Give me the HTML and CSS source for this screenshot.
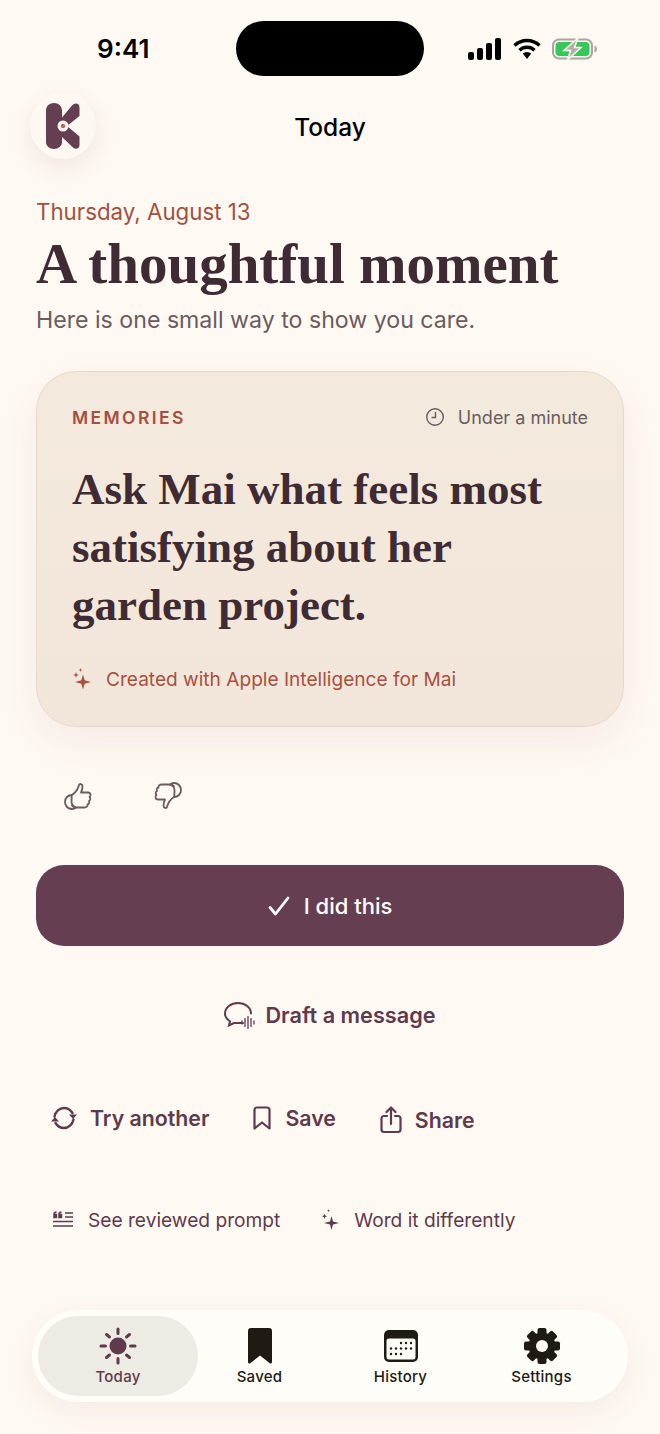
FILE: index.html
```html
<!DOCTYPE html>
<html lang="en">
<head>
    <meta charset="UTF-8">
    <meta name="viewport" content="width=device-width, initial-scale=1.0">
    <title>Today</title>
    <link rel="stylesheet" href="styles.css">
</head>
<body>
    <div class="screen">
        <div class="status-bar">
            <span class="time">9:41</span>
            <div class="island"></div>
            <div class="status-icons">
                <svg width="34" height="22" viewBox="0 0 34 22"><rect x="0" y="14" width="6" height="8" rx="2"/><rect x="9" y="10" width="6" height="12" rx="2"/><rect x="18" y="5" width="6" height="17" rx="2"/><rect x="27" y="0" width="6" height="22" rx="2"/></svg>
                <svg width="28" height="22" viewBox="0 0 28 22"><path d="M1.500 7.500a18 18 0 0 1 25 0" fill="none" stroke="#000" stroke-width="3.400"/><path d="M6.500 12.200a11 11 0 0 1 15 0" fill="none" stroke="#000" stroke-width="3.400"/><path d="M9.800 15.600a6 6 0 0 1 8.400 0L14 21z"/></svg>
                <svg width="46" height="22" viewBox="0 0 46 22"><rect x="1" y="1.500" width="39" height="19" rx="6" fill="none" stroke="#a9a6a0" stroke-width="2"/><rect x="3.500" y="4" width="34" height="14" rx="4" fill="#35c759"/><path d="M42.500 7.500c1.600.5 2.500 2 2.500 3.500s-.9 3-2.500 3.500z" fill="#a9a6a0"/><path d="M26 0 12 12.500h6.500L15.500 22 29 9.500h-6.500z" fill="#b3afa8" stroke="#fff9f3" stroke-width="1.500"/></svg>
            </div>
        </div>

        <div class="top-nav">
            <div class="logo">
                <svg width="34" height="46" viewBox="0 0 34 46">
                    <path d="M8 0c4.500 0 8 3 8 7.500v7L26 2.500c3-3.500 7.500-2.500 7.500 2v8.500L21 23l12.500 10.500V42c0 3.500-3.500 5-6.500 2.500L16 34v5c0 4-3.500 7-8 7s-8-3-8-7V7.500C0 3 3.500 0 8 0z" fill="#653e52"/>
                    <circle cx="17" cy="23" r="5.500" fill="#fdf8f1"/>
                    <circle cx="17" cy="23" r="2.200" fill="#cf5f45"/>
                </svg>
            </div>
            <h2 class="nav-title">Today</h2>
        </div>

        <div class="intro">
            <p class="date">Thursday, August 13</p>
            <h1>A thoughtful moment</h1>
            <p class="sub">Here is one small way to show you care.</p>
        </div>

        <div class="card">
            <div class="card-top">
                <span class="tag">MEMORIES</span>
                <span class="duration">
                    <svg width="20" height="20" viewBox="0 0 20 20" fill="none" stroke="#6a5c5f" stroke-width="1.400"><circle cx="10" cy="10" r="8.300"/><path d="M10.500 5v5.500H6.500"/></svg>
                    Under a minute
                </span>
            </div>
            <p class="card-title">Ask Mai what feels most satisfying about her garden project.</p>
            <div class="credit">
                <svg width="20" height="22" viewBox="0 0 20 22" fill="#a8503f"><path d="M11 6.500l1.700 5.800 6.300 1.700-6.300 1.700L11 21.500l-1.700-5.800L3 14l6.300-1.700z"/><path d="M4 4l.7 2.300L7 7l-2.300.7L4 10l-.7-2.300L1 7l2.300-.7z"/><path d="M8.500 0l.5 1.500 1.500.5-1.500.5-.5 1.500-.5-1.500L6.500 2 8 1.500z"/></svg>
                Created with Apple Intelligence for Mai
            </div>
        </div>

        <div class="feedback">
            <svg width="28" height="28" viewBox="0 0 28 28" fill="none" stroke="#6a5c5f" stroke-width="1.800" stroke-linejoin="round" stroke-linecap="round">
                <path d="M8 13c3-2 6-6 7-10 .4-1.500 3.500-1.500 3.500 1.500 0 2.500-.8 4.500-1.500 6h7c3 0 3 3.500 1.500 4.500 1.300 1 1 3.300-.5 4 .7 1.500 0 3.200-1.500 3.500.3 1.800-1 3-3 3h-7c-3 0-5-1-5.500-2"/>
                <path d="M8 13c-4 0-7 3-7 7s3 7 7 7c2 0 3-.5 4-1.500-2.500-1-4.500-3-4.500-6 0-2.500.5-4.500 0-6.500z"/>
            </svg>
            <svg width="28" height="28" viewBox="0 0 28 28" fill="none" stroke="#6a5c5f" stroke-width="1.800" stroke-linejoin="round" stroke-linecap="round">
                <path d="M20 15c-3 2-6 6-7 10-.4 1.500-3.500 1.500-3.500-1.500 0-2.500.8-4.500 1.500-6H4c-3 0-3-3.500-1.500-4.500-1.300-1-1-3.300.5-4-.7-1.500 0-3.200 1.500-3.500C4.200 3.700 5.500 2.500 7.500 2.500h7c3 0 5 1 5.500 2"/>
                <path d="M20 15c4 0 7-3 7-7s-3-7-7-7c-2 0-3 .5-4 1.500 2.500 1 4.500 3 4.500 6 0 2.500-.5 4.500 0 6.500z"/>
            </svg>
        </div>

        <button class="done-btn">
            <svg width="22" height="20" viewBox="0 0 22 20" fill="none" stroke="#fff" stroke-width="2.800" stroke-linecap="round" stroke-linejoin="round"><path d="M2 11.500 7.500 18 20 2"/></svg>
            I did this
        </button>

        <div class="draft">
            <svg width="32" height="28" viewBox="0 0 32 28" fill="none" stroke="#5f3a4d" stroke-width="2" stroke-linecap="round">
                <path d="M19 22H10l-5 2.500 1-4C3 18.500 1 15.500 1 12.500 1 6.500 7 2 14 2s13 4.500 13 10.500"/>
                <path d="M18 20v3M21 17.500v8M24 15.500v12M27 17.500v8M30 20v3" stroke-width="1.300"/>
            </svg>
            Draft a message
        </div>

        <div class="actions">
            <span class="action">
                <svg width="28" height="26" viewBox="0 0 28 26" fill="none" stroke="#5f3a4d" stroke-width="2.400" stroke-linecap="round">
                    <path d="M4.500 11.500C5.500 6.500 9.500 3 14 3c3.500 0 6.500 1.800 8.500 5"/>
                    <path d="M23.500 14.500C22.500 19.500 18.500 23 14 23c-3.500 0-6.500-1.800-8.500-5"/>
                    <path d="M27 9.500l-4 4.500-4-4.500z" fill="#5f3a4d" stroke="none"/>
                    <path d="M1 16.500l4-4.500 4 4.500z" fill="#5f3a4d" stroke="none"/>
                </svg>
                Try another
            </span>
            <span class="action save">
                <svg width="18" height="24" viewBox="0 0 18 24" fill="none" stroke="#5f3a4d" stroke-width="2.200" stroke-linejoin="round"><path d="M4 1.500h10c1.500 0 2.500 1 2.500 2.500v18.500L9 16.500 1.500 22.500V4c0-1.500 1-2.500 2.500-2.500z"/></svg>
                Save
            </span>
            <span class="action share">
                <svg width="22" height="28" viewBox="0 0 22 28" fill="none" stroke="#5f3a4d" stroke-width="2.200" stroke-linecap="round" stroke-linejoin="round"><path d="M7 10H4c-1.500 0-2.500 1-2.500 2.500v11c0 1.500 1 2.500 2.500 2.500h14c1.500 0 2.500-1 2.500-2.500v-11c0-1.500-1-2.500-2.500-2.500h-3"/><path d="M11 18V2M6.500 6 11 1.500 15.500 6"/></svg>
                Share
            </span>
        </div>

        <div class="links">
            <span class="link">
                <svg width="20" height="18" viewBox="0 0 20 18" fill="none" stroke="#5f3a4d" stroke-width="1.500"><path d="M12 2h8M12 6h8M0 10.500h20M0 15h20"/><path d="M1 3.500C1 2 2 1 3.500 1M1 3.500h2.500v3H1zM6 3.500C6 2 7 1 8.500 1M6 3.500h2.500v3H6z" fill="#5f3a4d"/></svg>
                See reviewed prompt
            </span>
            <span class="link second">
                <svg width="18" height="22" viewBox="0 0 18 22" fill="#5f3a4d"><path d="M10.500 7l1.500 5.500L18 14l-6 1.500L10.500 21 9 15.500 3 14l6-1.500z"/><path d="M3.500 4.500l.7 2 2 .7-2 .7-.7 2-.7-2-2-.7 2-.7z"/><path d="M7.500 0l.4 1.300 1.300.4-1.300.4-.4 1.300-.4-1.300-1.300-.4 1.300-.4z"/></svg>
                Word it differently
            </span>
        </div>

        <div class="tab-bar">
            <div class="tab active">
                <svg width="38" height="38" viewBox="0 0 38 38" fill="#5f3a4d" stroke="#5f3a4d" stroke-width="3" stroke-linecap="round">
                    <circle cx="19" cy="19" r="8.500" stroke="none"/>
                    <path d="M19 2v4.500M19 31.500V36M2 19h4.500M31.500 19H36M7.500 7.500l3 2.500M30.500 7.500l-3 2.500M7.500 30.500l3-2.500M30.500 30.500l-3-2.500"/>
                </svg>
                <span>Today</span>
            </div>
            <div class="tab">
                <svg width="38" height="38" viewBox="0 0 38 38"><path d="M10 1h18c2 0 3 1 3 3v31c0 1.500-1.500 2-2.500 1L19 28.500 9.500 36c-1 1-2.500.5-2.500-1V4c0-2 1-3 3-3z" fill="#201a14"/></svg>
                <span>Saved</span>
            </div>
            <div class="tab">
                <svg width="38" height="38" viewBox="0 0 38 38">
                    <rect x="2" y="3" width="34" height="32" rx="5" fill="#201a14"/>
                    <rect x="4.500" y="11.500" width="29" height="21" rx="2.500" fill="#fffdf8"/>
                    <g fill="#201a14"><circle cx="19" cy="16" r="1.200"/><circle cx="24" cy="16" r="1.200"/><circle cx="29" cy="16" r="1.200"/><circle cx="9" cy="21.500" r="1.200"/><circle cx="14" cy="21.500" r="1.200"/><circle cx="19" cy="21.500" r="1.200"/><circle cx="24" cy="21.500" r="1.200"/><circle cx="29" cy="21.500" r="1.200"/><circle cx="9" cy="27" r="1.200"/><circle cx="14" cy="27" r="1.200"/><circle cx="19" cy="27" r="1.200"/></g>
                </svg>
                <span>History</span>
            </div>
            <div class="tab">
                <svg width="38" height="38" viewBox="0 0 38 38">
                    <g fill="#201a14">
                        <circle cx="19" cy="19" r="13.500"/>
                        <rect x="14.500" y="1" width="9" height="36" rx="2"/>
                        <rect x="14.500" y="1" width="9" height="36" rx="2" transform="rotate(45 19 19)"/>
                        <rect x="14.500" y="1" width="9" height="36" rx="2" transform="rotate(90 19 19)"/>
                        <rect x="14.500" y="1" width="9" height="36" rx="2" transform="rotate(135 19 19)"/>
                    </g>
                    <circle cx="19" cy="19" r="6" fill="#fffdf8"/>
                </svg>
                <span>Settings</span>
            </div>
        </div>
    </div>
</body>
</html>
```
FILE: styles.css
```css
body {
    margin: 0;
    font-family: Inter, "Liberation Sans", sans-serif;
    background: #fff9f3;
}
.screen {
    width: 660px;
    height: 1434px;
    overflow: hidden;
    display: flex;
    flex-direction: column;
    background: #fff9f3;
}
.status-bar {
    height: 55px;
    padding-top: 21px;
    display: flex;
    align-items: center;
}
.time {
    width: 236px;
    padding-left: 97px;
    box-sizing: border-box;
    font-size: 26px;
    font-weight: 600;
    color: #000;
}
.island {
    width: 188px;
    height: 55px;
    border-radius: 28px;
    background: #000;
}
.status-icons {
    margin-left: 44px;
    display: flex;
    align-items: center;
    gap: 11px;
}
.top-nav {
    margin-top: 17px;
    height: 66px;
    padding-left: 30px;
    display: flex;
    align-items: center;
}
.logo {
    width: 66px;
    height: 66px;
    border-radius: 50%;
    background: #fdf9f2;
    box-shadow: 0 8px 24px rgba(90, 60, 50, 0.1);
    display: flex;
    align-items: center;
    justify-content: center;
}
.nav-title {
    margin: 2px 0 0;
    width: 468px;
    text-align: center;
    font-size: 24.500px;
    font-weight: 500;
    color: #000;
}
.intro {
    margin-top: 38px;
    padding-left: 36px;
}
.date {
    margin: 0;
    font-size: 22.300px;
    line-height: 30px;
    color: #a4503f;
}
h1 {
    margin: 6px 0 0;
    font-family: "Liberation Serif", serif;
    font-size: 57px;
    line-height: 62px;
    font-weight: 700;
    color: #3f2b33;
}
.sub {
    margin: 10px 0 0;
    font-size: 23.150px;
    line-height: 30px;
    color: #6a5c5f;
}
.card {
    margin: 36px 36px 0;
    height: 356px;
    box-sizing: border-box;
    padding: 35px 35px 0;
    border: 1.500px solid #e8d8ca;
    border-radius: 40px;
    background: linear-gradient(#f4e9dd, #f2e6da);
    box-shadow: 0 16px 40px rgba(120, 80, 60, 0.08);
}
.card-top {
    display: flex;
    justify-content: space-between;
    align-items: center;
    height: 20px;
}
.tag {
    font-size: 17.500px;
    font-weight: 600;
    letter-spacing: 2.400px;
    color: #a4503f;
}
.duration {
    display: flex;
    align-items: center;
    gap: 13px;
    font-size: 18px;
    color: #6a5c5f;
}
.card-title {
    margin: 33px 0 0;
    font-family: "Liberation Serif", serif;
    font-size: 45px;
    line-height: 58px;
    font-weight: 700;
    color: #3f2b33;
}
.credit {
    margin-top: 33px;
    display: flex;
    align-items: center;
    gap: 14px;
    font-size: 19.100px;
    color: #a8503f;
}
.feedback {
    margin-top: 55px;
    padding-left: 64px;
    display: flex;
    gap: 62px;
}
.done-btn {
    margin: 55px 36px 0;
    height: 81px;
    border: 0;
    border-radius: 28px;
    background: #653e52;
    color: #fff;
    font-family: inherit;
    font-size: 22px;
    font-weight: 500;
    display: flex;
    align-items: center;
    justify-content: center;
    gap: 14px;
}
.draft {
    margin-top: 54px;
    height: 30px;
    display: flex;
    align-items: center;
    justify-content: center;
    gap: 9px;
    font-size: 21.700px;
    font-weight: 600;
    color: #5f3a4d;
}
.actions {
    margin-top: 73px;
    padding-left: 50px;
    height: 30px;
    display: flex;
    align-items: center;
    gap: 44px;
    font-size: 21.300px;
    font-weight: 600;
    color: #5f3a4d;
}
.action {
    display: flex;
    align-items: center;
    gap: 12px;
}
.save {
    gap: 14px;
}
.share {
    margin-top: 3px;
    gap: 13px;
}
.links {
    margin-top: 72px;
    padding-left: 53px;
    height: 30px;
    display: flex;
    align-items: center;
    font-size: 19.150px;
    color: #5f3a4d;
}
.link {
    display: flex;
    align-items: center;
    gap: 15px;
}
.second {
    margin-left: 41px;
}
.tab-bar {
    margin: 75px 32px 0;
    height: 92px;
    box-sizing: border-box;
    padding: 6px;
    border-radius: 46px;
    background: #fffdf8;
    box-shadow: 0 10px 30px rgba(120, 80, 60, 0.08);
    display: flex;
}
.tab {
    width: 141px;
    display: flex;
    flex-direction: column;
    align-items: center;
    justify-content: center;
    gap: 2px;
    font-size: 15px;
    font-weight: 450;
    letter-spacing: 0.250px;
    color: #201a14;
}
.tab.active {
    width: 160px;
    margin-right: -9px;
    border-radius: 40px;
    background: #ecebe4;
    color: #5f3a4d;
}
```
